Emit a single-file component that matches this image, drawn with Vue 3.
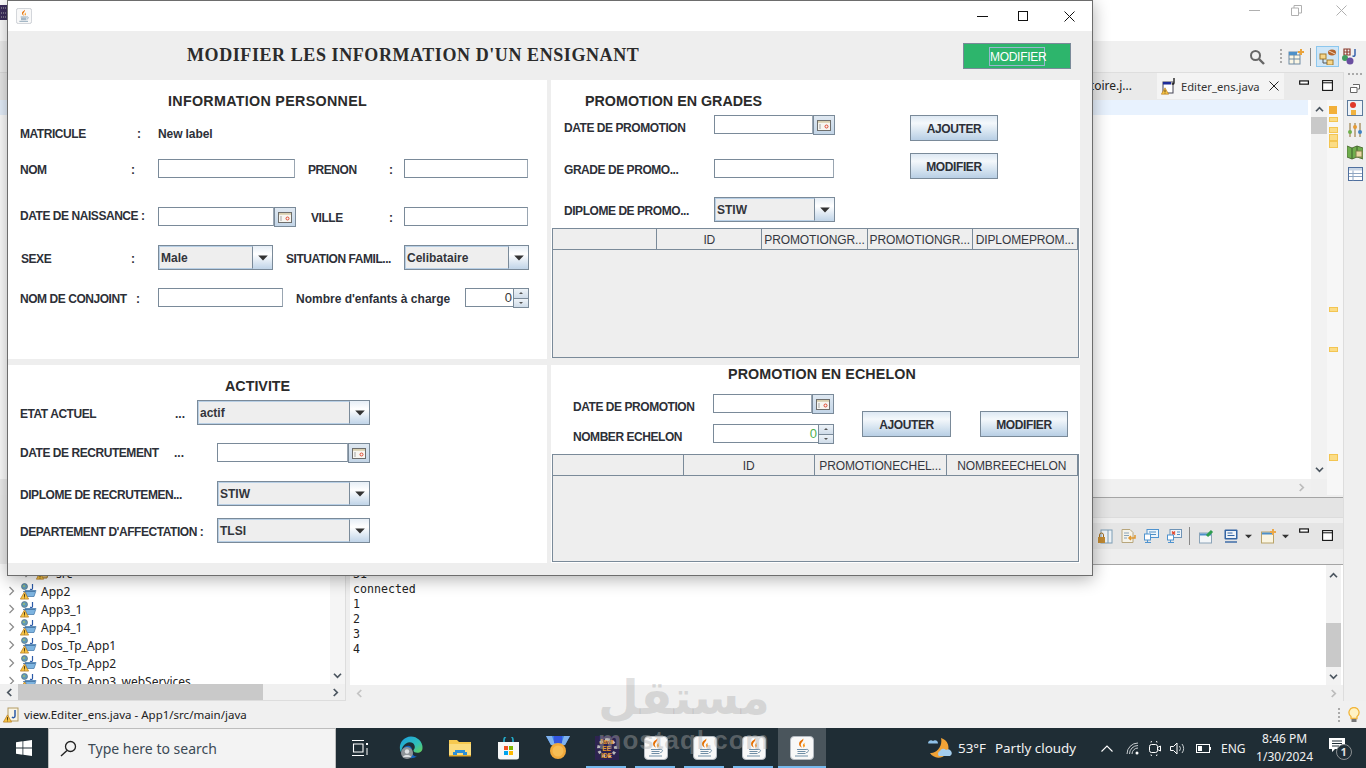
<script setup>
const treeItems = ['App2', 'App3_1', 'App4_1', 'Dos_Tp_App1', 'Dos_Tp_App2', 'Dos_Tp_App3_webServices']
const consoleLines = ['31', 'connected', '1', '2', '3', '4']
const marks = [
  { top: 17, h: 5 }, { top: 27, h: 6 }, { top: 34, h: 7 }, { top: 41, h: 7 }, { top: 207, h: 5 }, { top: 247, h: 5 }, { top: 354, h: 7 }
]
const gradeCols = ['', 'ID', 'PROMOTIONGR...', 'PROMOTIONGR...', 'DIPLOMEPROM...']
const echelonCols = ['', 'ID', 'PROMOTIONECHEL...', 'NOMBREECHELON']
const taskApps = [
  { id: 'java', on: true }, { id: 'java', on: true }, { id: 'java', on: true }
]
</script>

<template>
  <div class="desk">
    <svg class="defs" aria-hidden="true">
      <symbol id="java" viewBox="0 0 24 24">
        <rect x=".5" y=".5" width="23" height="23" rx="3.5" fill="#f8f8f8" stroke="#b4bac1" />
        <path d="M13.2 2.5c1 3-3.2 4.2-2.3 7 .3 1 1.1 2.2 1.1 2.2-2.2-1-3.4-3-2.8-5 .5-1.800 3-2.400 4-4.200z" fill="#e76f00" />
        <path d="M15.500 6.500c-2 1-3.300 2.200-2.300 4 .4.700.1 1.200.1 1.200 1.600-1 2.100-2.100 1.300-3.200-.5-.7 0-1.300.9-2z" fill="#f8981d" />
        <path d="M7 13.500h9M7.500 15.500h8M7.500 17.500h8M5 20h13" stroke="#6f8ea6" stroke-width="1.100" fill="none" />
        <path d="M16 13.500c3-.8 3.500 2.300.2 3.200" stroke="#6f8ea6" fill="none" />
      </symbol>
      <symbol id="warn" viewBox="0 0 10 9">
        <path d="M5 .5L9.600 8.500H.4z" fill="#f6c445" stroke="#b87b1e" stroke-width=".8" />
        <path d="M5 3v3M5 6.800v.8" stroke="#402a08" stroke-width="1" />
      </symbol>
      <symbol id="proj" viewBox="0 0 17 17">
        <circle cx="4.500" cy="3.500" r="3" fill="#5f9ab8" stroke="#566f7e" stroke-width=".7" />
        <circle cx="4" cy="3" r="1.100" fill="#9dbb72" />
        <path d="M12.500 1v4.500c0 1.200-1.600 1.300-2.300.5" stroke="#2b5aa8" stroke-width="1.200" fill="none" />
        <path d="M5 7.500h11l-2 6H7z" fill="#7db4e0" stroke="#4b7fb0" stroke-width=".8" />
        <path d="M3 8.500h12" stroke="#3f6e9e" stroke-width=".8" />
        <use href="#warn" x="0" y="8" width="9" height="9" />
      </symbol>
      <symbol id="cal" viewBox="0 0 16 13">
        <rect x="1.500" y="1.500" width="13" height="10" fill="#f7f6f1" stroke="#6e6e6c" />
        <rect x="2" y="2" width="12" height="1.800" fill="#d9cfae" />
        <path d="M4 5v5" stroke="#a5a5a5" />
        <circle cx="10.500" cy="7.500" r="1.500" fill="none" stroke="#e0452f" stroke-width="1" />
      </symbol>
      <symbol id="chev-up" viewBox="0 0 10 8"><path d="M1 6l4-4 4 4" fill="none" stroke="#4c5660" stroke-width="2" /></symbol>
      <symbol id="chev-down" viewBox="0 0 10 8"><path d="M1 2l4 4 4-4" fill="none" stroke="#4c5660" stroke-width="2" /></symbol>
      <symbol id="chev-left" viewBox="0 0 8 10"><path d="M6 1L2 5l4 4" fill="none" stroke="#4c5660" stroke-width="2" /></symbol>
      <symbol id="chev-right" viewBox="0 0 8 10"><path d="M2 1l4 4-4 4" fill="none" stroke="#4c5660" stroke-width="2" /></symbol>
      <symbol id="chev-right-off" viewBox="0 0 8 10"><path d="M2 1l4 4-4 4" fill="none" stroke="#bcbcbc" stroke-width="2" /></symbol>
      <symbol id="chev-left-off" viewBox="0 0 8 10"><path d="M6 1L2 5l4 4" fill="none" stroke="#c4c4c4" stroke-width="2" /></symbol>
      <symbol id="vmin" viewBox="0 0 12 6"><rect x=".75" y=".75" width="9.500" height="3.500" fill="#fff" stroke="#111" stroke-width="1.300" /></symbol>
      <symbol id="vmax" viewBox="0 0 11 11"><rect x=".6" y=".6" width="9.800" height="9.800" fill="#fff" stroke="#111" stroke-width="1.100" /><path d="M.5 2.800h10" stroke="#111" /></symbol>
      <symbol id="caret" viewBox="0 0 8 5"><path d="M0 .5h8L4 4.500z" fill="#333" /></symbol>
      <symbol id="tree-arrow" viewBox="0 0 7 10"><path d="M1.500 1l4 4-4 4" fill="none" stroke="#8a8a8a" stroke-width="1.200" /></symbol>
    </svg>

    <header class="ide-title">
      <svg class="app-ico" width="7" height="15" viewBox="0 0 7 15"><rect width="7" height="15" fill="#3b2d5c" /><path d="M1 3h5M1 8h5M1 12h5" stroke="#b9b9b9" stroke-dasharray="1 1" /></svg>
      <svg class="wc wc-min" width="11" height="11" viewBox="0 0 11 11"><path d="M0 5.500h11" stroke="#b0b0b0" /></svg>
      <svg class="wc wc-res" width="11" height="11" viewBox="0 0 11 11"><path d="M.5 3h7v7.500h-7zM3 3V.5h7.500v7.500H7.500" fill="none" stroke="#b0b0b0" /></svg>
      <svg class="wc wc-cls" width="11" height="11" viewBox="0 0 11 11"><path d="M.5.500l10 10M10.500.500l-10 10" stroke="#b0b0b0" /></svg>
    </header>

    <div class="ide-toolbar">
      <span class="grip left-grip"></span>
      <svg class="ti-search" width="16" height="16" viewBox="0 0 16 16"><circle cx="6.500" cy="6.500" r="4.500" fill="none" stroke="#666" stroke-width="2" /><path d="M10 10l5 5" stroke="#666" stroke-width="2.400" /></svg>
      <span class="grip"></span>
      <svg class="ti-persp" width="16" height="16" viewBox="0 0 16 16"><rect x="1" y="3" width="11" height="12" fill="#fbf6e4" stroke="#6e8aa3" /><path d="M1 6h11M6 6v9M1 10h11" stroke="#6e8aa3" /><rect x="1" y="3" width="8" height="3" fill="#4d90c9" /><path d="M13 0v6M10 3h6" stroke="#e9a33c" stroke-width="2" /></svg>
      <span class="ti-sep"></span>
      <span class="ti-active">
        <svg width="18" height="16" viewBox="0 0 18 16"><rect x="1" y="5" width="6" height="5" fill="#f6d68a" stroke="#a47a2a" /><rect x="8" y="11" width="6" height="5" fill="#f6d68a" stroke="#a47a2a" /><path d="M4 10v4h4" fill="none" stroke="#555" /><ellipse cx="13" cy="3.500" rx="4" ry="3" fill="#b5642c" /><path d="M10 2l6 3" stroke="#f0d8c0" /></svg>
      </span>
      <svg class="ti-db" width="17" height="17" viewBox="0 0 17 17"><path d="M3 1h6v6H3zM6 1v6M3 4h6" fill="none" stroke="#8a3b2d" stroke-width="1.200" /><circle cx="4" cy="10" r="3" fill="#3f9c5f" /><circle cx="9" cy="13" r="3.500" fill="#6a4fa0" /><path d="M14 1v6c0 1.500-1.500 1.500-2.500.8" fill="none" stroke="#2b5aa8" stroke-width="1.400" /></svg>
    </div>

    <div class="workspace">
      <div class="ide-main">
        <section class="editor">
          <div class="tabs">
            <span class="tab-off">toire.j...</span>
            <span class="tab-on">
              <svg width="16" height="17" viewBox="0 0 16 17"><rect x="2" y="4" width="10" height="11" fill="#fff" stroke="#445" /><rect x="2" y="4" width="8" height="2.500" fill="#1e2c9a" /><path d="M13 0v5c0 1.300-1.500 1.300-2.300.600" stroke="#111" stroke-width="1.300" fill="none" /><use href="#warn" x="0" y="9" width="8" height="8" /></svg>
              <span class="tab-name">Editer_ens.java</span>
              <svg class="tab-x" width="10" height="10" viewBox="0 0 10 10"><path d="M.5.500l9 9M9.500.500l-9 9" stroke="#222" /></svg>
            </span>
            <span class="view-btns">
              <svg width="11" height="6"><use href="#vmin" /></svg>
              <svg width="11" height="11"><use href="#vmax" /></svg>
            </span>
          </div>
          <div class="ed-body">
            <div class="ed-col">
              <div class="ed-text"><div class="cur-line"></div></div>
              <div class="hbar ed-hbar"><svg width="7" height="9"><use href="#chev-right-off" /></svg></div>
            </div>
            <div class="vbar">
              <svg width="9" height="7"><use href="#chev-up" /></svg>
              <span class="vthumb"></span>
              <svg class="vbar-down" width="9" height="7"><use href="#chev-down" /></svg>
            </div>
            <div class="ruler">
              <span class="ruler-top"></span>
              <i v-for="m in marks" :key="m.top" class="mark" :style="{ top: m.top + 'px', height: m.h + 'px' }"></i>
            </div>
          </div>
        </section>

        <section class="bottom">
          <div class="tree-panel">
            <div class="tree-body">
              <div class="tree-list">
                <div class="tree-row sub">
                  <svg width="7" height="10"><use href="#tree-arrow" /></svg>
                  <svg width="16" height="14" viewBox="0 0 16 14"><path d="M3 3h10l-2 9H2z" fill="#e6c27a" stroke="#a47a2a" /><use href="#warn" x="0" y="6" width="8" height="8" /></svg>
                  <span>src</span>
                </div>
                <div v-for="t in treeItems" :key="t" class="tree-row">
                  <svg width="7" height="10"><use href="#tree-arrow" /></svg>
                  <svg width="17" height="17"><use href="#proj" /></svg>
                  <span>{{ t }}</span>
                </div>
              </div>
              <div class="tree-vbar"><svg width="9" height="7"><use href="#chev-down" /></svg></div>
            </div>
            <div class="hbar tree-hbar">
              <svg width="7" height="9"><use href="#chev-left" /></svg>
              <span class="hthumb"></span>
              <svg class="hright" width="7" height="9"><use href="#chev-right" /></svg>
            </div>
          </div>

          <div class="console">
            <div class="con-band"></div>
            <div class="con-tools">
              <svg width="15" height="15" viewBox="0 0 15 15"><rect x="3" y="1" width="11" height="13" fill="#eef3f7" stroke="#7d9db5" /><path d="M10 1v13" stroke="#7d9db5" /><rect x="0" y="8" width="7" height="6" fill="#c08a35" /><path d="M1.500 8V6a2 2 0 0 1 4 0v2" fill="none" stroke="#a06c20" /></svg>
              <svg width="15" height="15" viewBox="0 0 15 15"><path d="M1 .5h8l3 3v10H1z" fill="#f5f3ea" stroke="#b8a67c" /><path d="M3 4h5M3 6.500h5M3 9h3" stroke="#8aa3b8" /><path d="M14 6v3H8m2-2l-2 2 2 2" fill="none" stroke="#e0962e" stroke-width="1.500" /></svg>
              <svg width="15" height="15" viewBox="0 0 15 15"><rect x="3" y=".5" width="11.500" height="8" fill="#eef5fb" stroke="#4f93cf" /><path d="M5 3h7M5 5.500h7" stroke="#4f8fc5" /><rect x=".5" y="5" width="6" height="6" fill="#fff" stroke="#4f93cf" /><path d="M1 13.500h6M3.500 11v2" stroke="#4f93cf" /></svg>
              <svg width="15" height="15" viewBox="0 0 15 15"><rect x="3" y=".5" width="11.500" height="8" fill="#eef5fb" stroke="#6f93b5" /><path d="M5 2.500l3 3M8 2.500l-3 3" stroke="#e2492f" stroke-width="1.500" /><path d="M10 3h3M10 5.500h3" stroke="#4f8fc5" /><rect x=".5" y="6" width="6" height="5" fill="#fff" stroke="#4f93cf" /><path d="M1 13.500h6M3.500 11v2" stroke="#4f93cf" /></svg>
              <span class="con-sep"></span>
              <svg class="g1" width="15" height="15" viewBox="0 0 15 15"><rect x=".5" y="4" width="12" height="10" fill="#f3f6f8" stroke="#8aa3b8" /><rect x="1" y="4.500" width="11" height="2" fill="#4d90c9" /><path d="M8 7l5-5" stroke="#2e9e4f" stroke-width="3" /></svg>
              <svg class="g2" width="14" height="14" viewBox="0 0 14 14"><rect x=".5" y=".5" width="13" height="10" rx="1" fill="#3465a4" /><rect x="2" y="2" width="10" height="7" fill="#eef3f8" /><path d="M3.500 4h5M3.500 6.500h7" stroke="#3465a4" /><path d="M1 13h12" stroke="#3465a4" stroke-width="1.400" /></svg>
              <svg class="g3" width="7" height="5"><use href="#caret" /></svg>
              <svg class="g4" width="15" height="15" viewBox="0 0 15 15"><rect x=".5" y="3" width="12" height="11" fill="#faf5e2" stroke="#b9a369" /><rect x="1" y="3.500" width="11" height="2" fill="#4d90c9" /><path d="M12 0v6M9 3h6" stroke="#eba94b" stroke-width="2" /></svg>
              <svg class="g5" width="7" height="5"><use href="#caret" /></svg>
              <svg class="g6" width="11" height="6"><use href="#vmin" /></svg>
              <svg class="g7" width="11" height="11"><use href="#vmax" /></svg>
            </div>
            <div class="con-gap"></div>
            <div class="con-body">
              <pre class="con-text"><span v-for="l in consoleLines" :key="l" class="con-line">{{ l }}</span></pre>
              <div class="con-vbar">
                <svg width="9" height="7"><use href="#chev-up" /></svg>
                <span class="con-thumb"></span>
                <svg class="con-down" width="9" height="7"><use href="#chev-down" /></svg>
              </div>
            </div>
            <div class="hbar con-hbar">
              <svg width="7" height="9"><use href="#chev-left-off" /></svg>
              <svg class="hright" width="7" height="9"><use href="#chev-right-off" /></svg>
            </div>
          </div>
        </section>
      </div>

      <aside class="sidebar">
        <span class="side-grip"></span>
        <svg width="10" height="9" viewBox="0 0 10 9"><path d="M3 .5h6.500v4.500H7.500M.5 3.500h6.500v5H.5z" fill="#fff" stroke="#666" /></svg>
        <svg class="s1" width="16" height="16" viewBox="0 0 16 16"><rect x=".5" y=".5" width="15" height="15" fill="#eef3f8" stroke="#5d7a9b" /><circle cx="6" cy="5" r="3" fill="#e0392b" /><rect x="4" y="10" width="5" height="5" fill="#f0b23f" /></svg>
        <svg class="s2" width="16" height="16" viewBox="0 0 16 16"><path d="M3 1v14M8 1v14M13 1v14" stroke="#8a6a2a" /><circle cx="3" cy="10" r="2" fill="#6fb04c" /><circle cx="8" cy="5" r="2" fill="#e59a34" /><circle cx="13" cy="10" r="2" fill="#3f82c4" /></svg>
        <svg class="s3" width="16" height="16" viewBox="0 0 16 16"><path d="M0 2l5 2 5-2 6 2v11l-6-2-5 2-5-2z" fill="#6fae4d" stroke="#53733a" /><path d="M5 4v11M10 2v11" stroke="#3d5c2b" /><rect x="9" y="7" width="6" height="6" fill="#e8d9a4" stroke="#7f7f4a" /></svg>
        <svg class="s4" width="15" height="14" viewBox="0 0 15 14"><rect x=".5" y=".5" width="14" height="13" fill="#fff" stroke="#4f6f9e" /><rect x="1" y="1" width="13" height="2.500" fill="#c9d6e6" /><path d="M1 6.500h13M1 9.500h13M5 3.500v10" stroke="#8fa6c2" /></svg>
      </aside>
    </div>

    <footer class="statusbar">
      <svg width="16" height="16" viewBox="0 0 16 16"><rect x="5" y="1" width="10" height="13" fill="#f8f4e6" stroke="#b39b63" /><path d="M12 3v6c0 2-2 2-3 1" fill="none" stroke="#2b5aa8" stroke-width="1.500" /><use href="#warn" x="0" y="7" width="9" height="9" /></svg>
      <span class="status-text">view.Editer_ens.java - App1/src/main/java</span>
      <span class="status-grip"></span>
      <svg class="bulb" width="12" height="16" viewBox="0 0 12 16"><path d="M6 .5a5 5 0 0 1 3 9v2H3v-2a5 5 0 0 1 3-9z" fill="#fff3c4" stroke="#f2b63c" stroke-width="1.300" /><rect x="3.500" y="12" width="5" height="3" fill="#777" /></svg>
    </footer>

    <nav class="taskbar">
      <svg class="win" width="16" height="16" viewBox="0 0 16 16"><path d="M0 2.200l6.500-.9v6.300H0zM7.300 1.200L16 0v7.600H7.300zM0 8.400h6.500v6.300L0 13.800zM7.300 8.400H16V16l-8.700-1.200z" fill="#fff" /></svg>
      <div class="search">
        <svg width="17" height="17" viewBox="0 0 17 17"><circle cx="10.500" cy="6.500" r="5" fill="none" stroke="#222" stroke-width="1.300" /><path d="M7 10.500L1 16" stroke="#222" stroke-width="1.400" /></svg>
        <span>Type here to search</span>
      </div>
      <svg class="taskview" width="16" height="16" viewBox="0 0 16 16"><path d="M0 .5h12M0 15.500h12M1.500 4h9.500v8H1.500z" fill="none" stroke="#fff" stroke-width="1.100" /><path d="M14 3h2v2h-2z" fill="#fff" /><path d="M15 8v7" stroke="#fff" /></svg>
      <span class="slot slot-plain">
        <svg width="24" height="24" viewBox="0 0 24 24"><defs><linearGradient id="edge" x1="0" y1="0" x2="1" y2="1"><stop offset="0" stop-color="#1b9de2" /><stop offset=".6" stop-color="#2fc0b8" /><stop offset="1" stop-color="#6bd04f" /></linearGradient></defs><path d="M12 .5a11.500 11.500 0 0 1 11.500 11.500c0 2-1 4-3 4.500-3 .7-6 0-6-2 0-1 2-2 1-5C14.500 6 10 5.500 7 7.500 4 9.500 2 13 2.500 17 .500 14 0 9 3 5 5.500 2 8.500.500 12 .5z" fill="url(#edge)" /><path d="M2.500 17C3 11 9 8 12 11c1.500 1.500 0 4 1 6.500 1 2.500 4 3 5 3a11.500 11.500 0 0 1-15.500-3.500z" fill="#1565c0" /><circle cx="8" cy="17" r="6" fill="#8f9498" /><circle cx="8" cy="15.500" r="2.200" fill="#dfe2e4" /><path d="M4 21c.8-2.600 7.200-2.600 8 0z" fill="#dfe2e4" /></svg>
      </span>
      <span class="slot slot-plain">
        <svg width="22" height="18" viewBox="0 0 22 18"><path d="M0 1h8l2 2h12v14H0z" fill="#f6c94f" /><path d="M0 5h22v12H0z" fill="#fbdc7d" /><path d="M6 11h10v2h2v4h-4v-3H8v3H4v-4h2z" fill="#2b8fd8" /><path d="M0 16h22v1.500H0z" fill="#e2a92a" /></svg>
      </span>
      <span class="slot slot-plain">
        <svg width="23" height="23" viewBox="0 0 23 23"><path d="M7 5V3a4.500 4.500 0 0 1 9 0v2" fill="none" stroke="#23a7c4" stroke-width="1.700" /><path d="M1 5h21v15a2.500 2.500 0 0 1-2.500 2.500h-16A2.500 2.500 0 0 1 1 20z" fill="#f7f8f8" /><rect x="7" y="9" width="4" height="4" fill="#f25022" /><rect x="12" y="9" width="4" height="4" fill="#7fba00" /><rect x="7" y="14" width="4" height="4" fill="#00a4ef" /><rect x="12" y="14" width="4" height="4" fill="#ffb900" /></svg>
      </span>
      <span class="slot slot-plain">
        <svg width="24" height="24" viewBox="0 0 24 24"><path d="M0 0h24l-5 9H5z" fill="#3b7de8" /><path d="M0 0h6l3 9H5zM24 0h-6l-3 9h4z" fill="#7fb2ee" /><path d="M8 0h8v7H8z" fill="#3457e0" /><circle cx="12" cy="15" r="8" fill="#f2a93b" /><circle cx="12" cy="15" r="5.500" fill="#f7bd55" /></svg>
      </span>
      <span class="slot slot-ide">
        <span class="ide-tile">
          <span class="ide-gear"></span>
          <span class="ide-txt">Java EE<br />IDE</span>
        </span>
        <i class="under"></i>
      </span>
      <span v-for="(a, i) in taskApps" :key="i" class="slot slot-ide">
        <svg width="24" height="24"><use href="#java" /></svg>
        <i class="under"></i>
      </span>
      <span class="slot slot-active">
        <svg width="24" height="24"><use href="#java" /></svg>
        <i class="under under-wide"></i>
      </span>
      <div class="tray">
        <svg class="weather" width="26" height="24" viewBox="0 0 26 24"><path d="M15 2a10 10 0 1 1-11 15c6 1 13-6 11-15z" fill="#f0a236" /><path d="M2 7a3 3 0 0 1 5-2 3 3 0 0 1 5 2.500H2.500z" fill="#8fc1e8" /><path d="M13 20a3 3 0 0 1 1-5 3.500 3.500 0 0 1 6-1 3 3 0 0 1 4 6z" fill="#a4cdee" /></svg>
        <span class="w-temp">53°F</span>
        <span class="w-desc">Partly cloudy</span>
        <svg class="t-caret" width="12" height="7" viewBox="0 0 12 7"><path d="M.5 6.500L6 1l5.500 5.500" fill="none" stroke="#fff" stroke-width="1.100" /></svg>
        <svg class="t-wifi" width="13" height="13" viewBox="0 0 13 13"><path d="M1 12a11 11 0 0 1 11-11M3.500 12a8.500 8.500 0 0 1 8.500-8.500M6 12a6 6 0 0 1 6-6" fill="none" stroke="#c8cdd0" /><circle cx="11" cy="11" r="1.500" fill="#fff" /></svg>
        <svg class="t-meet" width="12" height="15" viewBox="0 0 12 15"><path d="M2 1.500a3 3 0 0 1 6 0M2 13.500a3 3 0 0 0 6 0" fill="none" stroke="#fff" /><rect x=".5" y="3.500" width="8" height="8" rx="2" fill="none" stroke="#fff" /><path d="M8.500 6.500l3-1.500v5l-3-1.500" fill="none" stroke="#fff" /></svg>
        <svg class="t-vol" width="16" height="13" viewBox="0 0 16 13"><path d="M.5 4.500h3L7 1v11L3.500 8.500h-3z" fill="none" stroke="#fff" /><path d="M9.500 4a4 4 0 0 1 0 5M12 2a7 7 0 0 1 0 9" fill="none" stroke="#c8cdd0" /></svg>
        <svg class="t-bat" width="15" height="9" viewBox="0 0 15 9"><rect x=".5" y=".5" width="13" height="8" fill="none" stroke="#fff" /><rect x="2" y="2" width="4" height="5" fill="#fff" /><path d="M14.500 3v3" stroke="#fff" /></svg>
        <span class="t-lang">ENG</span>
        <span class="t-clock"><span>8:46 PM</span><span>1/30/2024</span></span>
        <span class="t-notif">
          <svg width="16" height="14" viewBox="0 0 16 14"><path d="M0 0h16v11H6l-3 3v-3H0z" fill="#fff" /><path d="M3 3h10M3 5.500h10M3 8h7" stroke="#1f2d35" /></svg>
          <b class="badge">1</b>
        </span>
      </div>
    </nav>

    <!-- Floating Swing window -->
    <div class="win-frame">
      <div class="win-title">
        <svg class="win-icon" width="16" height="16"><use href="#java" /></svg>
        <svg class="w-min" width="11" height="11" viewBox="0 0 11 11"><path d="M0 5.500h11" stroke="#111" /></svg>
        <svg class="w-max" width="10" height="10" viewBox="0 0 10 10"><rect x=".5" y=".5" width="9" height="9" fill="none" stroke="#111" /></svg>
        <svg class="w-cls" width="11" height="11" viewBox="0 0 11 11"><path d="M.5.500l10 10M10.500.500l-10 10" stroke="#111" /></svg>
      </div>

      <div class="win-head">
        <h1>MODIFIER LES INFORMATION D'UN ENSIGNANT</h1>
        <button class="green"><span>MODIFIER</span></button>
      </div>

      <div class="win-grid">
        <section class="panel p-info">
          <h2 class="t-info">INFORMATION PERSONNEL</h2>
          <div class="row r-mat"><label>MATRICULE</label><b>:</b><span class="lbl">New label</span></div>
          <div class="row r-nom">
            <label>NOM</label><b>:</b><span class="field"></span><i></i>
            <label>PRENON</label><b>:</b><span class="field"></span>
          </div>
          <div class="row r-date">
            <label class="up">DATE DE NAISSANCE :</label><span class="field f-top"></span>
            <span class="calbtn"><svg width="16" height="13"><use href="#cal" /></svg></span><i></i>
            <label>VILLE</label><b>:</b><span class="field f-top"></span>
          </div>
          <div class="row r-sex">
            <label class="in1">SEXE</label><b>:</b>
            <span class="combo"><span class="combo-v">Male</span><span class="combo-a"><svg width="10" height="6"><use href="#caret" /></svg></span></span><i></i>
            <label>SITUATION FAMIL...</label>
            <span class="combo"><span class="combo-v">Celibataire</span><span class="combo-a"><svg width="10" height="6"><use href="#caret" /></svg></span></span>
          </div>
          <div class="row r-conj">
            <label>NOM DE CONJOINT</label><b>:</b><span class="field f-top"></span><i></i>
            <label class="norm">Nombre d'enfants à charge</label>
            <span class="spin"><span class="spin-v">0</span><span class="spin-b"><em class="sup"></em><em class="sdn"></em></span></span>
          </div>
        </section>

        <section class="panel p-grade">
          <h2 class="t-grade">PROMOTION EN GRADES</h2>
          <div class="pg-body">
            <div class="pg-form">
              <div class="row r-g1"><label class="dn">DATE DE PROMOTION</label><span class="field f-top"></span><span class="calbtn"><svg width="16" height="13"><use href="#cal" /></svg></span></div>
              <div class="row r-g2"><label>GRADE DE PROMO...</label><span class="field"></span></div>
              <div class="row r-g3"><label>DIPLOME DE PROMO...</label><span class="combo"><span class="combo-v">STIW</span><span class="combo-a"><svg width="10" height="6"><use href="#caret" /></svg></span></span></div>
            </div>
            <div class="pg-btns">
              <button class="mbtn">AJOUTER</button>
              <button class="mbtn">MODIFIER</button>
            </div>
          </div>
          <div class="tbl">
            <div class="thead c5"><span v-for="(c, i) in gradeCols" :key="i">{{ c }}</span></div>
          </div>
        </section>

        <section class="panel p-act">
          <h2 class="t-act">ACTIVITE</h2>
          <div class="row r-a1"><label>ETAT ACTUEL</label><b class="dots">...</b><span class="combo"><span class="combo-v">actif</span><span class="combo-a"><svg width="10" height="6"><use href="#caret" /></svg></span></span></div>
          <div class="row r-a2"><label class="up2">DATE DE RECRUTEMENT</label><b class="dots up2">...</b><span class="field f-top"></span><span class="calbtn"><svg width="16" height="13"><use href="#cal" /></svg></span></div>
          <div class="row r-a3"><label>DIPLOME DE RECRUTEMEN...</label><span class="combo"><span class="combo-v">STIW</span><span class="combo-a"><svg width="10" height="6"><use href="#caret" /></svg></span></span></div>
          <div class="row r-a4"><label>DEPARTEMENT D'AFFECTATION :</label><span class="combo"><span class="combo-v">TLSI</span><span class="combo-a"><svg width="10" height="6"><use href="#caret" /></svg></span></span></div>
        </section>

        <section class="panel p-ech">
          <h2 class="t-ech">PROMOTION EN ECHELON</h2>
          <div class="pe-body">
            <div class="pe-form">
              <div class="row r-e1"><label class="dn">DATE DE PROMOTION</label><span class="field f-top"></span><span class="calbtn"><svg width="16" height="13"><use href="#cal" /></svg></span></div>
              <div class="row r-e2"><label class="dn">NOMBER ECHELON</label><span class="spin"><span class="spin-v green-v">0</span><span class="spin-b"><em class="sup"></em><em class="sdn"></em></span></span></div>
            </div>
            <div class="pe-btns">
              <button class="mbtn w89">AJOUTER</button>
              <button class="mbtn">MODIFIER</button>
            </div>
          </div>
          <div class="tbl">
            <div class="thead c4"><span v-for="(c, i) in echelonCols" :key="i">{{ c }}</span></div>
          </div>
        </section>
      </div>
    </div>

    <div class="mark-wm">
      <span class="wm-ar">مستقل</span>
      <span class="wm-en">mostaql.com</span>
    </div>
  </div>
</template>

<style>
html, body { margin: 0; padding: 0; background: #eee; }
</style>

<style scoped>
* { box-sizing: border-box; }
.desk {
  position: relative; width: 1366px; height: 768px; overflow: hidden;
  display: flex; flex-direction: column; background: #efefef;
  font-family: "Noto Sans", "Open Sans", sans-serif; color: #222;
}
.defs { position: absolute; width: 0; height: 0; }

/* IDE chrome */
.ide-title { height: 41px; background: #fff; display: flex; align-items: flex-start; padding: 5px 0 0 0; flex: none; }
.wc-min { margin-left: 1242px; }
.wc-res { margin-left: 31px; }
.wc-cls { margin-left: 34px; }
.ide-toolbar { height: 31px; flex: none; background: #f0f0f0; display: flex; align-items: center; justify-content: flex-end; padding-right: 8px; }
.left-grip { margin: 0 auto 0 2px; }
.grip { width: 2px; height: 16px; margin-left: 15px; background: repeating-linear-gradient(#aaa 0 2px, transparent 2px 4px); }
.ti-persp { margin-left: 6px; }
.ti-sep { width: 1px; height: 18px; background: #888; margin: 0 5px 0 6px; }
.ti-active { width: 23px; height: 21px; background: #cfe6f7; border: 1px solid #8cc7ee; display: flex; align-items: center; justify-content: center; }
.ti-db { margin-left: 2px; }

.workspace { flex: 1; display: flex; min-height: 0; }
.ide-main { width: 1343px; display: flex; flex-direction: column; }
.sidebar { flex: 1; display: flex; flex-direction: column; align-items: center; border-left: 1px solid #ddd; background: #efefef; padding-top: 1px; }
.side-grip { width: 14px; height: 2px; margin: 0 0 9px; background: repeating-linear-gradient(90deg, #aaa 0 2px, transparent 2px 4px); }
.s1 { margin-top: 7px; }
.s2 { margin-top: 6px; }
.s3 { margin-top: 6px; }
.s4 { margin-top: 7px; }

.editor { height: 425px; display: flex; flex-direction: column; flex: none; }
.tabs { height: 28px; flex: none; display: flex; align-items: flex-start; justify-content: flex-end; background: #eaeaea; border-top: 1px solid #dedede; }
.tab-off { font-size: 12px; margin-right: 25px; line-height: 26px; color: #222; }
.tab-on { width: 127px; height: 26px; background: #f4f4f4; display: flex; align-items: center; padding-left: 4px; font-size: 11.200px; }
.tab-name { margin-left: 4px; color: #333; }
.tab-x { margin-left: 9px; }
.view-btns { width: 59px; display: flex; align-items: flex-start; padding: 7px 0 0 15px; gap: 12px; }
.ed-body { flex: 1; display: flex; position: relative; background: #efefef; min-height: 0; }
.ed-col { width: 1311px; display: flex; flex-direction: column; }
.ed-text { flex: 1; background: #fff; }
.cur-line { height: 15px; margin: 0 3px 0 0; background: #e8f2fe; }
.hbar { height: 16px; flex: none; background: #f0f0f0; display: flex; align-items: center; }
.ed-hbar { justify-content: flex-end; padding-right: 6px; height: 16px; margin-bottom: 2px; }
.vbar { width: 16px; background: #f2f2f2; display: flex; flex-direction: column; align-items: center; padding-top: 6px; height: 379px; }
.vthumb { width: 16px; height: 17px; margin-top: 4px; background: #c9c9c9; }
.vbar-down { margin-top: auto; margin-bottom: 6px; }
.ruler { width: 16px; background: #f7f7f7; position: relative; height: 395px; }
.ruler-top { position: absolute; left: 2px; top: 6px; width: 8px; height: 8px; background: #f2b03a; }
.mark { position: absolute; left: 2px; width: 9px; background: #fbdc85; border: 1px solid #f3c552; }

.bottom { flex: 1; display: flex; min-height: 0; }
.tree-panel { width: 346px; flex: none; display: flex; flex-direction: column; justify-content: flex-end; border-right: 1px solid #ddd; margin-right: 4px; border-bottom: 1px solid #ddd; }
.tree-body { height: 120px; display: flex; background: #fff; }
.tree-list { width: 330px; overflow: hidden; padding-left: 8px; }
.tree-row { height: 18px; display: flex; align-items: center; gap: 4.500px; font-size: 12px; color: #222; white-space: nowrap; }
.tree-row.sub { padding-left: 16px; }
.tree-vbar { flex: 1; background: #f5f5f5; display: flex; align-items: flex-end; justify-content: center; padding-bottom: 5px; }
.tree-hbar { padding-left: 6px; background: #f0f0f0; }
.hthumb { width: 245px; height: 16px; background: #c9c9c9; margin-left: 5px; }
.hright { margin-left: auto; margin-right: 6px; }

.console { flex: 1; display: flex; flex-direction: column; min-width: 0; border-top: 1px solid #a5a5a5; }
.con-band { height: 20px; flex: none; background: #e4e4e4; border-bottom: 1px solid #dcdcdc; }
.con-tools { height: 26px; flex: none; margin-top: 5px; background: #e5e5e5; display: flex; align-items: center; justify-content: flex-end; gap: 8px; padding-right: 10px; }
.con-sep { width: 1px; height: 18px; background: #888; margin: 0 0 0 -1.500px; }
.g1 { margin-left: 1.500px; }
.g2 { margin-left: 1.500px; }
.g3 { margin-left: -.500px; }
.g4 { margin-left: 1px; }
.g5 { margin-left: -2px; }
.g6 { margin-left: 2px; margin-bottom: 10px; }
.g7 { margin-left: 4px; margin-bottom: 2px; }
.con-gap { height: 16px; flex: none; background: #eee; border-bottom: 1px solid #a5a5a5; }
.con-body { height: 120px; flex: none; display: flex; background: #fff; }
.con-text { flex: 1; margin: 0; padding: 2px 0 0 3px; font-family: "DejaVu Sans Mono", monospace; font-size: 11.600px; line-height: 15px; color: #222; display: flex; flex-direction: column; }
.con-line { display: block; height: 15px; }
.con-vbar { width: 15px; margin-right: 2px; background: #f2f2f2; display: flex; flex-direction: column; align-items: center; padding-top: 7px; }
.con-thumb { width: 15px; height: 44px; background: #c9c9c9; margin-top: 44px; }
.con-down { margin-top: 6px; }
.con-hbar { padding-left: 6px; border-bottom: 1px solid #ddd; height: 17px; }

.statusbar { height: 27px; flex: none; background: #f0f0f0; display: flex; align-items: center; padding-left: 3px; }
.status-text { font-size: 11.500px; margin-left: 5px; color: #222; }
.status-grip { width: 2px; height: 14px; margin-left: auto; background: repeating-linear-gradient(#aaa 0 2px, transparent 2px 4px); }
.bulb { margin: 0 6px 0 8px; }

/* Taskbar */
.taskbar { height: 40px; flex: none; background: #1f2d35; display: flex; align-items: center; padding-left: 16px; color: #fff; }
.search { width: 288px; height: 40px; margin-left: 16px; background: #f3f3f3; border: 1px solid #bdbdbd; border-bottom: 0; display: flex; align-items: center; padding-left: 11px; color: #3c4a55; font-size: 14px; }
.search span { margin-left: 11px; }
.taskview { margin-left: 16px; }
.slot { width: 49px; height: 40px; display: flex; align-items: center; justify-content: center; position: relative; flex: none; }
.taskview + .slot { margin-left: 18px; }
.under { position: absolute; left: 4px; right: 5px; bottom: 0; height: 2px; background: #76b9ed; }
.under-wide { left: 0; right: 0; }
.slot-active { background: #4a555c; width: 48px; }
.ide-tile { width: 24px; height: 24px; background: #2d2350; position: relative; display: flex; align-items: center; justify-content: center; overflow: hidden; }
.ide-gear { position: absolute; inset: 2px; border: 3px dotted #b9b9b9; border-radius: 50%; }
.ide-txt { position: relative; font: 700 6.500px/7px "Liberation Sans", sans-serif; color: #e99a2b; text-align: center; }
.tray { margin-left: 100px; display: flex; align-items: center; height: 40px; flex: 1; position: relative; font-size: 13.400px; color: #f2f2f2; white-space: nowrap; }
.w-temp { margin-left: 6px; }
.w-desc { margin-left: 9px; }
.t-caret { margin-left: 25px; }
.t-wifi { margin-left: 13px; }
.t-meet { margin-left: 10px; }
.t-vol { margin-left: 9px; }
.t-bat { margin-left: 10px; }
.t-lang { font-size: 12px; margin-left: 10px; }
.t-clock { display: flex; flex-direction: column; align-items: center; font-size: 12px; line-height: 18px; margin-left: 8px; width: 62px; }
.t-notif { margin-left: 13px; position: relative; display: flex; margin-bottom: 6px; }
.badge { position: absolute; left: 7px; top: 6px; width: 16px; height: 16px; border-radius: 50%; background: #1f2d35; border: 1px solid #8b8f92; font: 700 11px/14px "Noto Sans", sans-serif; text-align: center; color: #ddd; }

/* Swing window */
.win-frame {
  position: absolute; left: 7px; top: 0; width: 1086px; height: 576px;
  background: #eee; border: 1px solid #6d6d6d;
  box-shadow: 0 3px 16px rgba(0, 0, 0, .32);
  display: flex; flex-direction: column;
  font-family: "Liberation Sans", Arial, sans-serif; color: #2d3038;
}
.win-title { height: 30px; flex: none; background: #fff; display: flex; align-items: center; padding-left: 8px; }
.w-min { margin-left: 945px; }
.w-max { margin-left: 30px; }
.w-cls { margin-left: 36px; }
.win-head { height: 49px; flex: none; display: flex; align-items: center; background: #eee; position: relative; }
h1 { margin: -2px 0 0 179px; font: 700 18px/22px "Liberation Serif", serif; letter-spacing: .58px; color: #2b2b2b; white-space: nowrap; width: 776px; }
.green { width: 108px; height: 26px; margin: 1px 0 0 0; padding: 0; background: #2db56c; border: 1px solid #7a8a99; display: flex; align-items: center; justify-content: center; }
.green span { width: 56px; height: 19px; border: 1px solid #9ab6cf; color: #fff; font: 400 12px/18px "Liberation Sans", sans-serif; letter-spacing: -.3px; text-align: center; }
.win-grid { display: grid; grid-template-columns: 539px 529px; grid-template-rows: 279px 198px; column-gap: 4px; row-gap: 6px; }
.panel { background: #fff; display: flex; flex-direction: column; }
h2 { margin: 0; height: 18px; font: 700 14.300px/18px "Liberation Sans", sans-serif; color: #2b2b2b; white-space: nowrap; }
.p-info { padding: 12px 0 0 12px; }
.t-info { margin-left: 148px; letter-spacing: .3px; }
.p-grade { padding-top: 12px; height: 278px; }
.t-grade { margin-left: 34px; }
.p-act { padding: 12px 0 0 12px; }
.t-act { margin-left: 205px; }
.t-ech { margin-left: 177px; letter-spacing: .1px; }

.row { display: grid; align-items: center; }
.row label { font-size: 12px; letter-spacing: -.45px; font-weight: 700; white-space: nowrap; overflow: visible; padding-top: 2px; }
.row label.norm { letter-spacing: 0; }
.row b { font-size: 12px; font-weight: 700; padding-top: 2px; }
.lbl { font-size: 12px; letter-spacing: -.1px; font-weight: 700; padding-top: 2px; }
.up { margin-bottom: 4px; }
.up2 { margin-bottom: 3px; }
.dn { margin-top: 3px; }
.in1 { padding-left: 1px; }
.dots { font-size: 12px; }

.r-mat { height: 18px; margin-top: 14px; grid-template-columns: 117px 21px auto; }
.r-nom { height: 19px; margin-top: 17px; grid-template-columns: 111px 27px 137px 13px 81px 15px 124px; }
.r-date { height: 20px; margin-top: 29px; grid-template-columns: 138px 116px 22px 15px 78px 15px 124px; }
.r-sex { height: 25px; margin-top: 18px; grid-template-columns: 111px 27px 115px 13px 118px 125px; }
.r-conj { height: 20px; margin-top: 18px; grid-template-columns: 116px 22px 125px 13px 169px 64px; }

.r-a1 { height: 25px; margin-top: 5px; grid-template-columns: 155px 22px 173px; }
.r-a2 { height: 20px; margin-top: 18px; grid-template-columns: 154px 43px 131px 22px; }
.r-a3 { height: 25px; margin-top: 18px; grid-template-columns: 197px 153px; }
.r-a4 { height: 25px; margin-top: 12px; grid-template-columns: 197px 153px; }

.pg-body { display: flex; margin-top: 5px; padding-left: 13px; }
.pg-form { width: 271px; flex: none; }
.r-g1 { height: 20px; grid-template-columns: 150px 99px 22px; }
.r-g2 { height: 19px; margin-top: 24px; grid-template-columns: 150px 120px; }
.r-g3 { height: 25px; margin-top: 19px; grid-template-columns: 150px 121px; }
.pg-btns { margin-left: 75px; display: flex; flex-direction: column; gap: 12px; }

.pe-body { display: flex; margin-top: 11px; padding-left: 22px; }
.pe-form { width: 261px; flex: none; }
.r-e1 { height: 20px; grid-template-columns: 140px 99px 22px; }
.r-e2 { height: 20px; margin-top: 10px; grid-template-columns: 140px 121px; }
.pe-btns { display: flex; gap: 29px; margin: 17px 0 0 28px; align-items: flex-start; }

.field { display: block; height: 19px; background: #fff; border: 1px solid #7a8a99; border-right-color: #9aa6b2; border-left-width: 1px; }
.f-top { align-self: start; }
.calbtn { height: 20px; background: linear-gradient(#dfe8f1, #c3d5e7); border: 1px solid #7a8a99; display: flex; align-items: center; justify-content: center; }

.combo { height: 25px; display: flex; border: 1px solid #7a8a99; background: #eee; min-width: 0; }
.combo-v { flex: 1; border: 1px solid #b8cfe5; border-right: 1px solid #7a8a99; font: 700 12px/23px "Liberation Sans", sans-serif; padding-left: 1px; color: #33353b; white-space: nowrap; overflow: hidden; }
.combo-a { width: 19px; flex: none; background: linear-gradient(#e6eef6 0, #fff 35%, #c0d4e8 100%); display: flex; align-items: center; justify-content: center; }
.spin { height: 20px; display: flex; align-self: center; }
.spin-v { flex: 1; height: 19px; border: 1px solid #7a8a99; border-right: 0; text-align: right; font: 400 13px/17px "Liberation Sans", sans-serif; padding-right: 1px; color: #3a3a3a; }
.green-v { color: #4fb04f; }
.spin-b { width: 16px; flex: none; display: flex; flex-direction: column; border: 1px solid #7a8a99; background: #dfe7ef; }
.spin-b em { flex: 1; position: relative; display: block; background: linear-gradient(#eef3f8, #cfdce9); }
.sup { border-bottom: 1px solid #7a8a99; }
.sup::after, .sdn::after { content: ""; position: absolute; left: 5px; top: 3px; border-left: 2px solid transparent; border-right: 2px solid transparent; }
.sup::after { border-bottom: 2px solid #555; }
.sdn::after { border-top: 2px solid #555; }

.mbtn { width: 88px; height: 26px; padding: 0; border: 1px solid #7a8a99; background: linear-gradient(#dde8f3 0, #f4f8fb 30%, #b8cfe5 100%); font: 700 12px/26px "Liberation Sans", sans-serif; letter-spacing: -.4px; color: #2d3038; }
.w89 { width: 89px; }

.tbl { flex: 1; margin: 6px 1px 0; background: #eee; border: 1px solid #7a8a99; display: flex; flex-direction: column; min-height: 0; }
.p-ech .tbl { margin: 10px 1px 1px; }
.thead { display: grid; height: 21px; flex: none; border-bottom: 1px solid #7a8a99; margin-left: -1px; }
.c5 { grid-template-columns: repeat(5, 1fr); }
.c4 { grid-template-columns: repeat(4, 1fr); }
.thead span { border-right: 1px solid #7a8a99; font: 400 12px/22px "Liberation Sans", sans-serif; letter-spacing: -.12px; color: #35383f; text-align: center; white-space: nowrap; overflow: hidden; }

/* Watermark */
.mark-wm { position: absolute; left: 600px; top: 668px; width: 168px; display: flex; flex-direction: column; align-items: center; pointer-events: none; }
.wm-ar { font: 700 47px/60px "DejaVu Sans", sans-serif; color: rgba(120, 120, 120, .22); white-space: nowrap; }
.wm-en { font: 700 26px/26px "Liberation Sans", sans-serif; color: rgba(170, 170, 170, .42); letter-spacing: 1px; white-space: nowrap; margin-top: -1px; }
</style>
